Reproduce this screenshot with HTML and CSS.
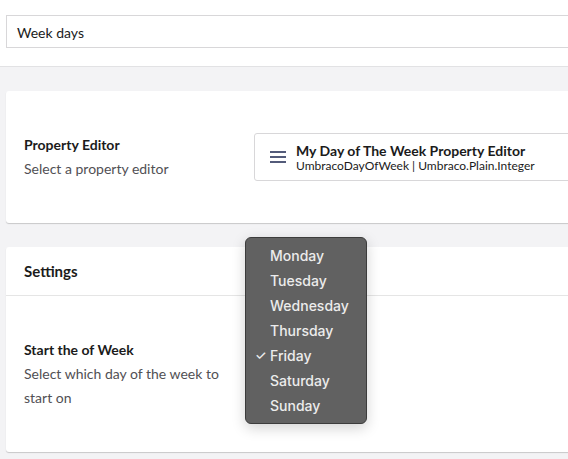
FILE: index.html
```html
<!DOCTYPE html>
<html>
<head>
<meta charset="utf-8">
<link rel="stylesheet" href="styles.css">
</head>
<body>
<header class="top">
  <div class="name-input">Week days</div>
</header>
<main class="content">
  <section class="card">
    <div class="card-body">
      <div class="prop-row">
        <div class="prop-label">
          <div class="label">Property Editor</div>
          <div class="desc">Select a property editor</div>
        </div>
        <div class="editor-picker">
          <svg class="menu-icon" width="16" height="12" viewBox="0 0 16 12"><path d="M0 1h16M0 6h16M0 11h16" stroke="#1b264f" stroke-width="1.4" fill="none"/></svg>
          <div class="picker-text">
            <div class="picker-title">My Day of The Week Property Editor</div>
            <div class="picker-sub">UmbracoDayOfWeek | Umbraco.Plain.Integer</div>
          </div>
        </div>
      </div>
    </div>
  </section>
  <section class="card">
    <div class="card-header">Settings</div>
    <div class="card-body">
      <div class="prop-row">
        <div class="prop-label">
          <div class="label">Start the of Week</div>
          <div class="desc">Select which day of the week to start on</div>
        </div>
        <div class="prop-editor"></div>
      </div>
    </div>
  </section>
</main>
<div class="dropdown">
  <div class="opt">Monday</div>
  <div class="opt">Tuesday</div>
  <div class="opt">Wednesday</div>
  <div class="opt">Thursday</div>
  <div class="opt selected"><span class="check">✓</span>Friday</div>
  <div class="opt">Saturday</div>
  <div class="opt">Sunday</div>
</div>
</body>
</html>
```
FILE: styles.css
```css
html, body {
  margin: 0;
  padding: 0;
  overflow: hidden;
}
body {
  background: #f3f3f5;
  font-family: Lato, "Noto Sans", sans-serif;
  color: #1b1b1b;
  width: 568px;
  height: 459px;
  position: relative;
}
.top {
  background: #fff;
  height: 67px;
  border-bottom: 1px solid #e2e2e4;
  padding: 15px 0 0 6px;
  box-sizing: border-box;
  overflow: hidden;
}
.name-input {
  height: 33px;
  box-sizing: border-box;
  border: 1px solid #d8d7d9;
  margin-right: -40px;
  padding: 2px 0 0 10px;
  font-size: 14px;
  line-height: 30px;
  color: #1b1b1b;
}
.content {
  padding: 24px 0 8px 6px;
  display: flex;
  flex-direction: column;
  gap: 24px;
  overflow: hidden;
}
.card {
  background: #fff;
  border-radius: 3px;
  box-shadow: 0 1px 1px rgba(0,0,0,0.18);
  margin-right: -40px;
}
.card-header {
  height: 49px;
  box-sizing: border-box;
  border-bottom: 1px solid #e5e5e5;
  padding: 0 18px;
  font-size: 15px;
  font-weight: bold;
  line-height: 48px;
}
.card-body {
  padding: 42px 18px 42px;
}
.prop-row {
  display: flex;
  gap: 20px;
  align-items: flex-start;
}
.prop-label {
  width: 210px;
  flex: none;
  font-size: 14px;
  line-height: 24px;
}
.label {
  font-weight: bold;
  color: #1b1b1b;
}
.desc {
  color: #515054;
}
.editor-picker {
  flex: 1;
  height: 48px;
  box-sizing: border-box;
  border: 1px solid #d8d7d9;
  border-radius: 3px;
  display: flex;
  align-items: center;
  padding-left: 15px;
  gap: 10px;
}
.menu-icon {
  flex: none;
}
.picker-title {
  font-size: 14px;
  font-weight: bold;
  line-height: 17px;
  color: #1b1b1b;
}
.picker-sub {
  font-size: 12px;
  line-height: 14px;
  color: #1b1b1b;
}
.dropdown {
  position: absolute;
  left: 245px;
  top: 237px;
  width: 122px;
  box-sizing: border-box;
  background: #616161;
  border: 1px solid #3c3c3c;
  border-radius: 6px;
  padding: 5px 0 5px;
  box-shadow: 0 4px 14px rgba(0,0,0,0.18);
  font-family: Inter, "Noto Sans", sans-serif;
  font-size: 14px;
  font-weight: 500;
  color: #ececec;
}
.opt {
  height: 25px;
  line-height: 25px;
  padding-left: 24px;
  position: relative;
}
.check {
  position: absolute;
  left: 9px;
  font-size: 13px;
}
```
